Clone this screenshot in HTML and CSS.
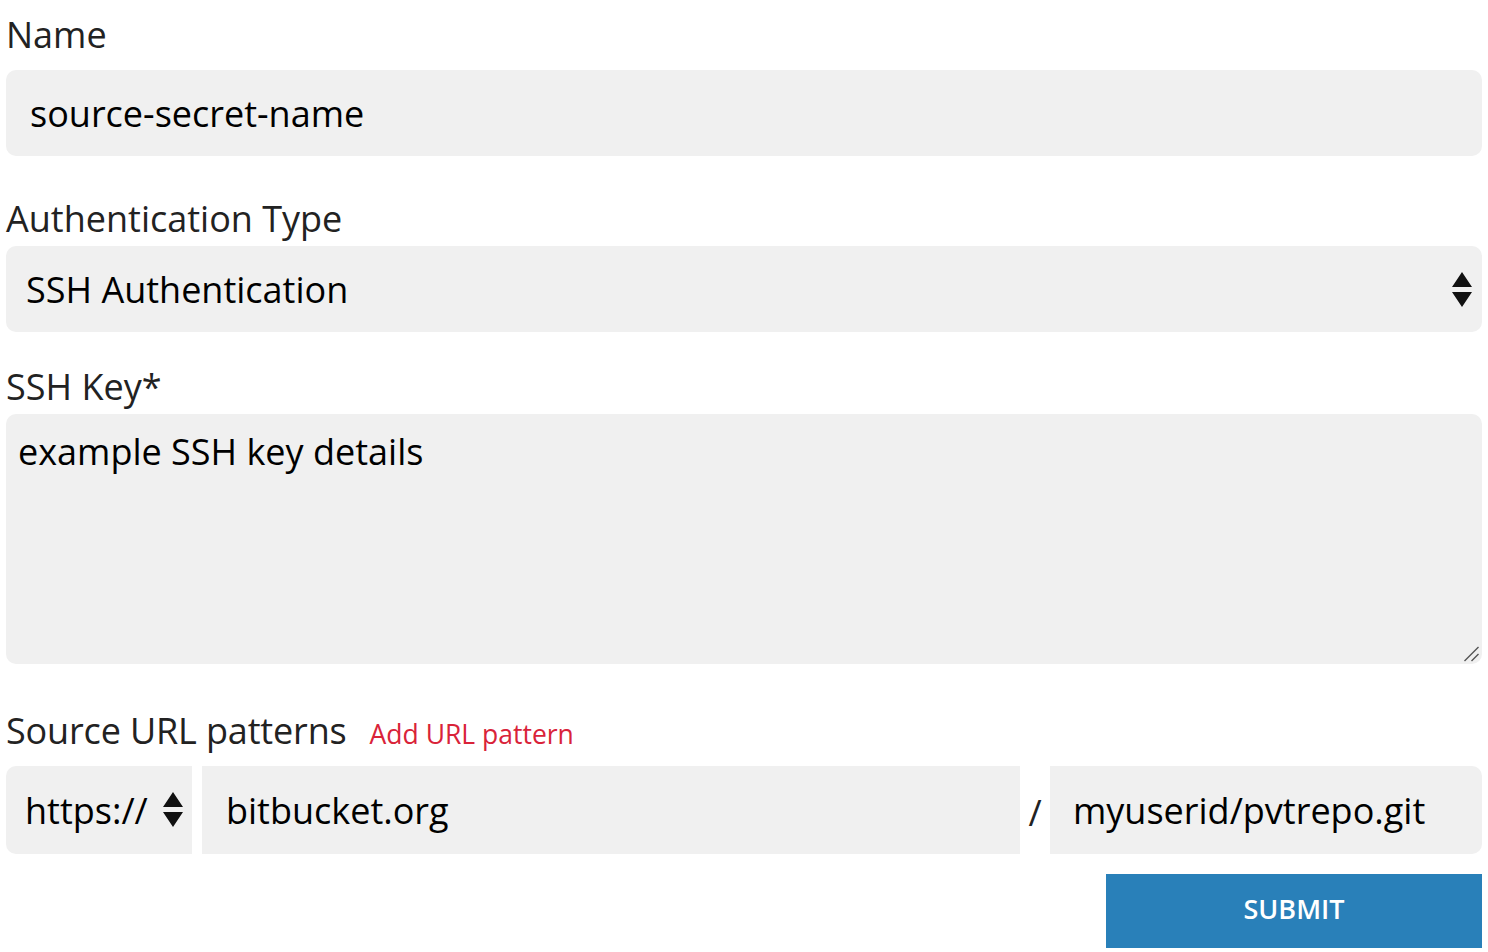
FILE: index.html
```html
<!DOCTYPE html>
<html lang="en">
<head>
<meta charset="utf-8">
<title>Source secret</title>
<link rel="stylesheet" href="styles.css">
</head>
<body>
<form class="form">
  <div class="field field-name">
    <label class="label" for="name">Name</label>
    <input class="control rounded" id="name" type="text" value="source-secret-name">
  </div>

  <div class="field field-auth">
    <label class="label" for="auth">Authentication Type</label>
    <div class="select-wrap">
      <select class="control control-select rounded" id="auth">
        <option>SSH Authentication</option>
      </select>
      <svg class="arrows" width="20" height="35" viewBox="0 0 20 35" aria-hidden="true"><path d="M0 15 L10 0 L20 15 Z M0 20 L20 20 L10 35 Z" fill="#111"/></svg>
    </div>
  </div>

  <div class="field field-key">
    <label class="label" for="key">SSH Key*</label>
    <div class="area-wrap">
      <textarea class="control control-area rounded" id="key">example SSH key details</textarea>
      <svg class="grip" width="18" height="18" viewBox="0 0 18 18" aria-hidden="true"><path d="M2.5 16 L16.5 2 M9.5 16 L16.5 9" stroke="#555" stroke-width="1.4" fill="none"/></svg>
    </div>
  </div>

  <div class="field field-url">
    <div class="label-row">
      <span class="label">Source URL patterns</span>
      <a class="add-link" href="#">Add URL pattern</a>
    </div>
    <div class="url-row">
      <div class="select-wrap proto-wrap">
        <select class="control control-proto">
          <option>https://</option>
        </select>
        <svg class="arrows arrows-proto" width="20" height="35" viewBox="0 0 20 35" aria-hidden="true"><path d="M0 15 L10 0 L20 15 Z M0 20 L20 20 L10 35 Z" fill="#111"/></svg>
      </div>
      <input class="control control-host" type="text" value="bitbucket.org">
      <span class="sep">/</span>
      <input class="control control-path" type="text" value="myuserid/pvtrepo.git">
    </div>
  </div>

  <div class="actions">
    <button class="submit" type="button">SUBMIT</button>
  </div>
</form>
</body>
</html>
```

FILE: styles.css
```css
* {
  box-sizing: border-box;
}

html, body {
  margin: 0;
  padding: 0;
  background: #ffffff;
}

body {
  font-family: "Open Sans", "Noto Sans", sans-serif;
  color: #222222;
  overflow: hidden;
}

.form {
  padding: 13px 6px 0 6px;
  display: flex;
  flex-direction: column;
}

.field {
  display: flex;
  flex-direction: column;
}

.label {
  display: block;
  font-size: 36px;
  line-height: 44px;
  color: #222222;
}

.field-name .label {
  margin-bottom: 13px;
}

.field-auth {
  margin-top: 41px;
}

.field-auth .label {
  margin-bottom: 5px;
}

.field-key {
  margin-top: 33px;
}

.field-key .label {
  margin-bottom: 5px;
}

.field-url {
  margin-top: 45px;
}

.label-row {
  display: flex;
  align-items: baseline;
  gap: 23px;
  margin-bottom: 13px;
}

.label-row .label {
  letter-spacing: -0.15px;
}

.add-link {
  font-size: 26.5px;
  color: #d92339;
  text-decoration: none;
}

.control {
  display: block;
  width: 100%;
  height: 86px;
  border: none;
  outline: none;
  margin: 0;
  background: #f0f0f0;
  font-family: "Open Sans", "Noto Sans", sans-serif;
  font-size: 36px;
  color: #000000;
  padding: 0 24px;
}

.rounded {
  border-radius: 10px;
}

.select-wrap {
  position: relative;
}

.control-select {
  appearance: none;
  -webkit-appearance: none;
  padding: 0 60px 0 20px;
}

.arrows {
  position: absolute;
  right: 10px;
  top: 26px;
  pointer-events: none;
}

.area-wrap {
  position: relative;
}

.control-area {
  height: 250px;
  padding: 13px 12px;
  resize: none;
  line-height: normal;
}

.grip {
  position: absolute;
  right: 2px;
  bottom: 1px;
  pointer-events: none;
}

.url-row {
  display: flex;
  align-items: stretch;
  height: 88px;
}

.proto-wrap {
  width: 186px;
  flex: none;
  margin-right: 10px;
}

.control-proto {
  appearance: none;
  -webkit-appearance: none;
  height: 88px;
  border-radius: 10px 0 0 10px;
  padding: 0 40px 0 19px;
}

.arrows-proto {
  right: 9px;
  top: 26px;
}

.control-host {
  flex: 1;
  width: auto;
  height: 88px;
  padding-left: 24px;
}

.sep {
  width: 30px;
  flex: none;
  display: flex;
  align-items: center;
  justify-content: center;
  font-size: 36px;
  color: #222222;
  padding-top: 4px;
}

.control-path {
  width: 432px;
  flex: none;
  height: 88px;
  padding-left: 23px;
  border-radius: 0 10px 10px 0;
}

.actions {
  display: flex;
  justify-content: flex-end;
  margin-top: 20px;
}

.submit {
  width: 376px;
  height: 74px;
  border: none;
  border-radius: 0;
  background: #2980b9;
  color: #ffffff;
  font-family: "Open Sans", "Noto Sans", sans-serif;
  font-size: 27px;
  font-weight: 600;
  padding: 0 0 5px 0;
  cursor: pointer;
}
```
